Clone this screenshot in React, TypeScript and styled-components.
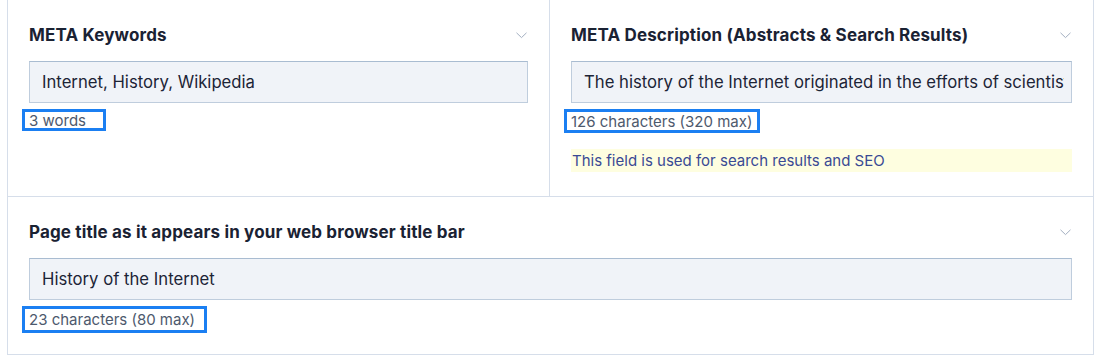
import React from 'react';
import styled, { createGlobalStyle } from 'styled-components';

type Field = {
  title: string;
  value: string;
  count: string;
  countWidth: number;
  countHeight: number;
  hint?: string;
};

const keywords: Field = {
  title: 'META Keywords',
  value: 'Internet, History, Wikipedia',
  count: '3 words',
  countWidth: 84,
  countHeight: 22,
};

const description: Field = {
  title: 'META Description (Abstracts & Search Results)',
  value:
    'The history of the Internet originated in the efforts of scientists and engineers to build and interconnect computer networks.',
  count: '126 characters (320 max)',
  countWidth: 196,
  countHeight: 24,
  hint: 'This field is used for search results and SEO',
};

const pageTitle: Field = {
  title: 'Page title as it appears in your web browser title bar',
  value: 'History of the Internet',
  count: '23 characters (80 max)',
  countWidth: 185,
  countHeight: 27,
};

const Chevron = () => (
  <svg width="11" height="7" viewBox="0 0 11 7" fill="none">
    <path d="M0.5 0.8L5.5 5.6L10.5 0.8" stroke="#a3afc0" strokeWidth="1" />
  </svg>
);

const FieldBlock: React.FC<{ field: Field }> = ({ field }) => (
  <>
    <FieldHeader>
      <FieldTitle>{field.title}</FieldTitle>
      <Chevron />
    </FieldHeader>
    <TextInput readOnly value={field.value} />
    <Counter $width={field.countWidth} $height={field.countHeight}>
      {field.count}
    </Counter>
    {field.hint && <Hint>{field.hint}</Hint>}
  </>
);

const App = () => (
  <>
    <GlobalStyle />
    <Page>
      <Panel>
        <TopRow>
          <Cell $divider>
            <FieldBlock field={keywords} />
          </Cell>
          <Cell>
            <FieldBlock field={description} />
          </Cell>
        </TopRow>
        <Cell $last>
          <FieldBlock field={pageTitle} />
        </Cell>
      </Panel>
    </Page>
  </>
);

export default App;

/* Styles */

const GlobalStyle = createGlobalStyle`
  body {
    margin: 0;
    background: #ffffff;
    font-family: Inter, "Noto Sans", sans-serif;
  }
`;

const Page = styled.div`
  width: 1099px;
  height: 364px;
  padding-left: 7px;
  box-sizing: border-box;
  overflow: hidden;
`;

const Panel = styled.div`
  width: 1087px;
  box-sizing: border-box;
  border: 1px solid #d6deea;
  border-top: none;
`;

const TopRow = styled.div`
  display: grid;
  grid-template-columns: 542px 1fr;
  border-bottom: 1px solid #d6deea;
`;

const Cell = styled.div<{ $divider?: boolean; $last?: boolean }>`
  display: flex;
  flex-direction: column;
  align-items: flex-start;
  box-sizing: border-box;
  padding: 23px 21px ${(p) => (p.$last ? '21px' : '24px')};
  border-right: ${(p) => (p.$divider ? '1px solid #d6deea' : 'none')};
  min-width: 0;
`;

const FieldHeader = styled.div`
  display: flex;
  align-items: center;
  justify-content: space-between;
  width: 100%;
  height: 24px;
  padding-right: 1px;
  box-sizing: border-box;
  margin-bottom: 14px;
`;

const FieldTitle = styled.h2`
  margin: 0;
  font-size: 17px;
  font-weight: 700;
  line-height: 24px;
  color: #1a2233;
  letter-spacing: 0.15px;
`;

const TextInput = styled.input`
  width: 100%;
  height: 42px;
  box-sizing: border-box;
  padding: 0 7px 0 12px;
  border: 1px solid #bfcddd;
  border-top-color: #a9bcd1;
  background: #f0f3f8;
  font-family: Inter, "Noto Sans", sans-serif;
  font-size: 16.7px;
  color: #1c2436;
  outline: none;
`;

const Counter = styled.div<{ $width: number; $height: number }>`
  display: flex;
  align-items: center;
  width: ${(p) => p.$width}px;
  height: ${(p) => p.$height}px;
  box-sizing: border-box;
  margin: 6px 0 0 -7px;
  padding: 0 4px;
  border: 3px solid #1b7ff2;
  font-size: 15px;
  color: #4d596d;
  white-space: nowrap;
`;

const Hint = styled.div`
  width: 100%;
  height: 23px;
  margin-top: 16px;
  background: #fefee0;
  font-size: 15px;
  line-height: 23px;
  color: #3a4a94;
  padding-left: 1px;
  box-sizing: border-box;
`;
